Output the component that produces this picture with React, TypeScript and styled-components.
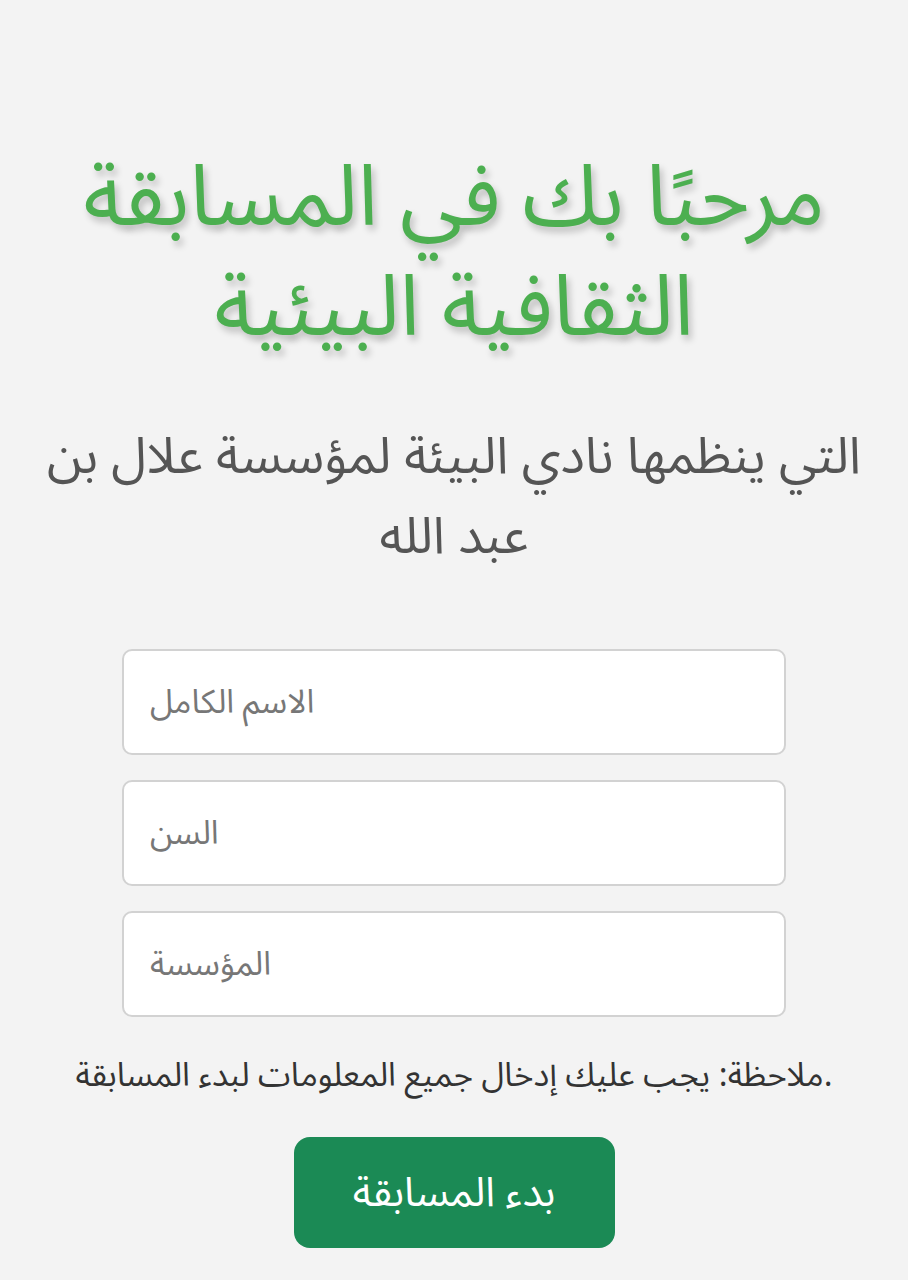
import styled, { createGlobalStyle } from "styled-components";

const GlobalStyle = createGlobalStyle`
  html, body {
    margin: 0;
    padding: 0;
    background: #f3f3f3;
  }
  body {
    font-family: "Noto Sans Arabic", "Noto Naskh Arabic", "DejaVu Sans", sans-serif;
  }
`;

const Page = styled.main`
  display: flex;
  flex-direction: column;
  align-items: center;
  padding: 143px 30px 30px;
  min-height: 1280px;
  box-sizing: border-box;
  text-align: center;
`;

const Title = styled.h1`
  margin: 0;
  max-width: 800px;
  color: #4caf50;
  font-size: 85px;
  line-height: 110px;
  font-weight: 400;
  text-shadow: 3px 5px 7px rgba(0, 0, 0, 0.22);
`;

const Subtitle = styled.p`
  margin: 54px 0 0;
  max-width: 830px;
  color: #555;
  font-size: 51px;
  line-height: 80px;
`;

const Form = styled.form`
  display: flex;
  flex-direction: column;
  align-items: center;
  gap: 25px;
  margin-top: 72px;
  width: 664px;
`;

const Field = styled.input`
  width: 100%;
  height: 106px;
  box-sizing: border-box;
  padding: 0 26px;
  border: 2px solid #d2d2d2;
  border-radius: 10px;
  background: #fff;
  font-family: inherit;
  font-size: 33px;
  color: #333;
  outline: none;

  &::placeholder {
    color: #777;
  }
`;

const Note = styled.p`
  margin: 34px 0 0;
  color: #333;
  font-size: 33px;
  line-height: 50px;
`;

const StartButton = styled.button`
  margin-top: 36px;
  width: 321px;
  height: 111px;
  border: none;
  border-radius: 16px;
  background: #1b8a55;
  color: #fff;
  font-family: inherit;
  font-size: 41px;
  cursor: pointer;
`;

export default function App() {
  return (
    <>
      <GlobalStyle />
      <Page>
        <Title>مرحبًا بك في المسابقة الثقافية البيئية</Title>
        <Subtitle>التي ينظمها نادي البيئة لمؤسسة علال بن عبد الله</Subtitle>
        <Form onSubmit={(e) => e.preventDefault()}>
          <Field type="text" placeholder="الاسم الكامل" />
          <Field type="number" placeholder="السن" />
          <Field type="text" placeholder="المؤسسة" />
        </Form>
        <Note>ملاحظة: يجب عليك إدخال جميع المعلومات لبدء المسابقة.</Note>
        <StartButton type="button">بدء المسابقة</StartButton>
      </Page>
    </>
  );
}
